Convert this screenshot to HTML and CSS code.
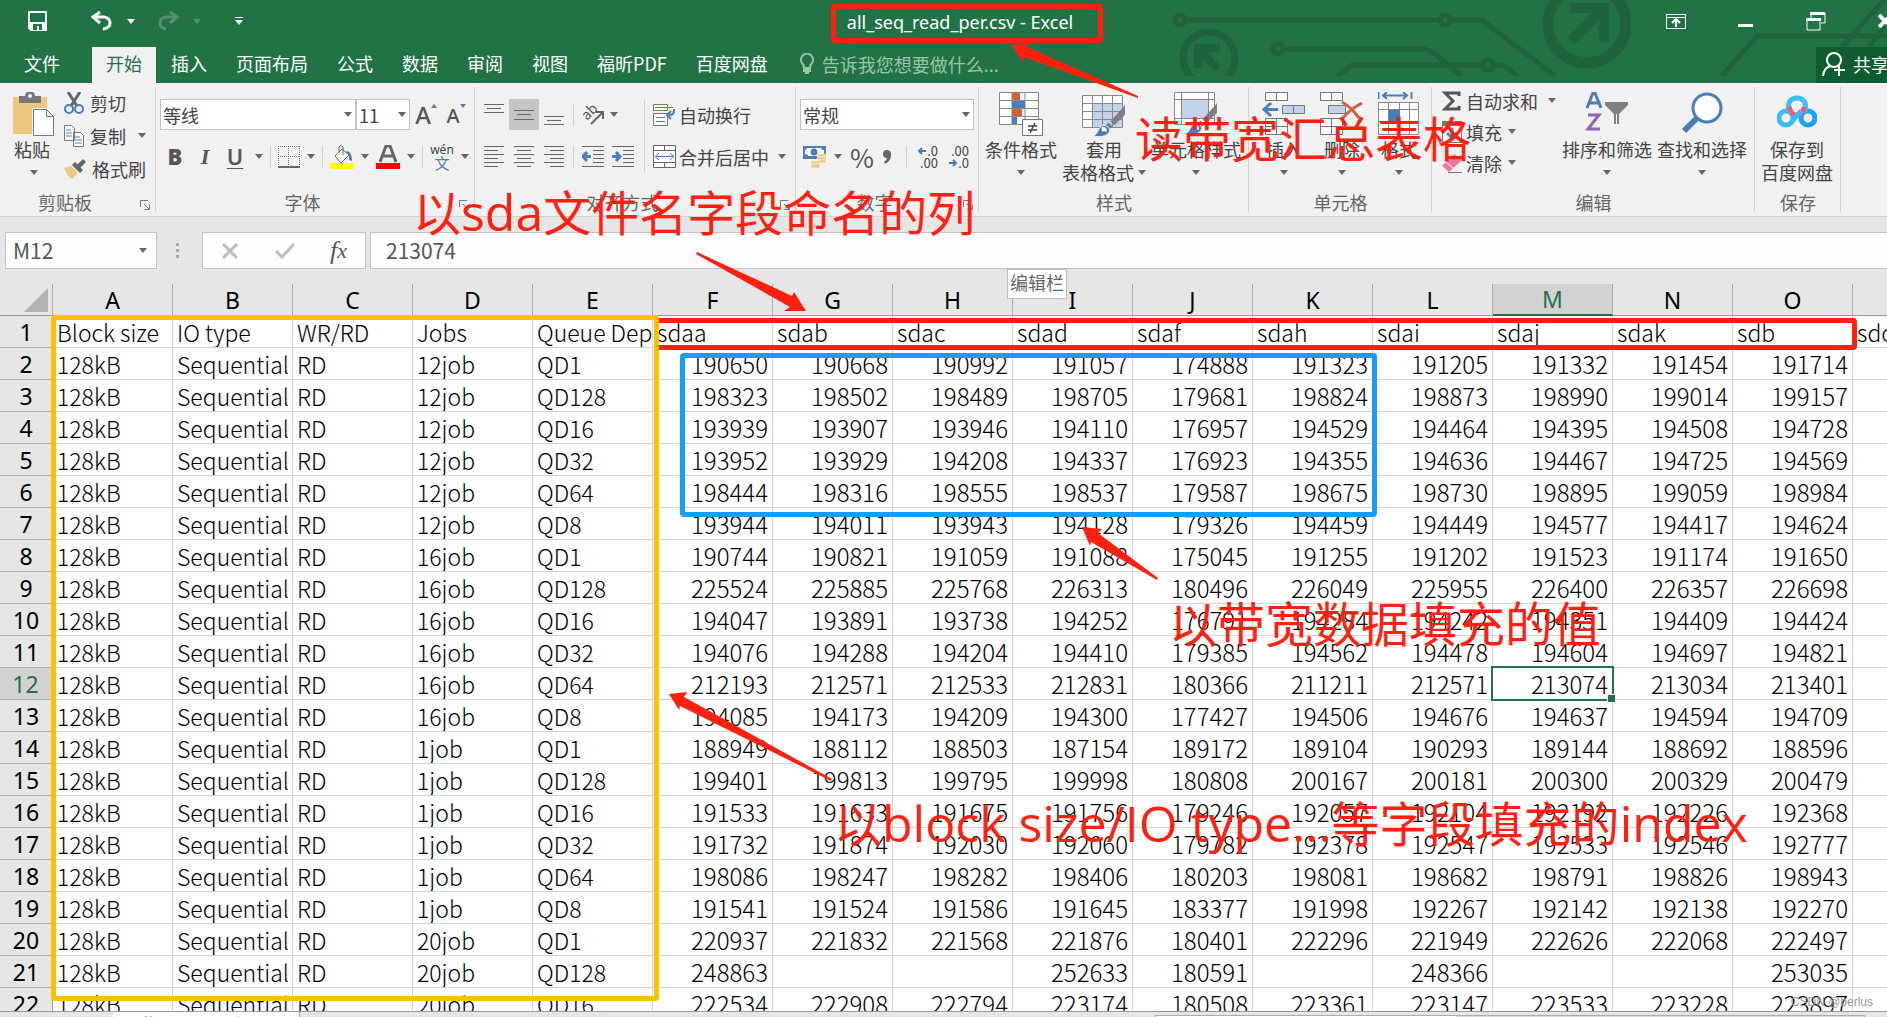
FILE: index.html
```html
<!DOCTYPE html>
<html lang="zh-CN">
<head>
<meta charset="utf-8">
<title>all_seq_read_per.csv - Excel</title>
<link rel="stylesheet" href="styles.css">
</head>
<body>
<svg class="defs" aria-hidden="true">
  <symbol id="caret" viewBox="0 0 8 5"><path d="M0 0h8L4 5z" fill="currentColor"/></symbol>
  <symbol id="launcher" viewBox="0 0 10 10"><path d="M.5 7V.5H8M4 4l5 5M9.500 4.500v5h-5" fill="none" stroke="#777"/></symbol>
  <symbol id="brush" viewBox="0 0 34 34"><path d="M33 1v10L22 22l-4-4z" fill="#7f7f7f"/><path d="M16 19l4 4-3 3-4-4z" fill="#7f7f7f"/><path d="M0 33c6-2 5-10 11-11 5 0 8 5 5 8-3 4-10 4-16 3z" fill="#4a7ebb" stroke="#f1f1f1"/><path d="M9 24c4-1 6 2 5 5-2-2-3 0-5-1z" fill="#fff"/></symbol>
</svg>

<header class="titlebar">
  <svg class="pattern" width="720" height="76" viewBox="1167 0 720 76" aria-hidden="true">
    <g fill="none" stroke="#1e633d" stroke-width="5">
      <circle cx="1180" cy="20" r="5"/><path d="M1186 20h253M1451 20h31l73 56"/><circle cx="1445" cy="20" r="5"/>
      <circle cx="1278" cy="49" r="5"/><path d="M1284 49h139q6 0 12 5l27 22"/>
      <path d="M1335 78l17-13h130M1494 65h6q6 0 18 12"/><circle cx="1488" cy="65" r="5"/>
      <path d="M1721 77l36-41h130M1842 47l42-47M1868 47l19-22"/>
      <circle cx="1209" cy="58" r="26" stroke-width="7"/>
      <circle cx="1587" cy="24" r="39" stroke-width="11"/>
      <path d="M1218 69l-18-18M1198 68V48h22" stroke-width="8"/>
      <path d="M1571 41l32-32M1570 8h34v34" stroke-width="10"/>
    </g>
  </svg>
  <div class="title-row">
    <div class="quick">
      <button class="tb" aria-label="保存"><svg width="20" height="20" viewBox="0 0 20 20"><path d="M1 1h17v18H3l-2-2z" fill="none" stroke="#fff" stroke-width="2"/><path d="M2 11h16v8H2z" fill="#fff"/><path d="M5 13h9v6h-3v-4H9v4H5z" fill="#217346"/></svg></button>
      <button class="tb undo" aria-label="撤消"><svg width="22" height="20" viewBox="0 0 22 20"><path d="M2 6h11q6 1 6 6t-7 6" fill="none" stroke="#fff" stroke-width="3"/><path d="M9 1L2 6l7 6" fill="none" stroke="#fff" stroke-width="3"/></svg></button>
      <svg class="caret" aria-hidden="true"><use href="#caret"/></svg>
      <button class="tb dim" aria-label="恢复"><svg width="22" height="20" viewBox="0 0 22 20"><path d="M20 6H9q-6 1-6 6t6 6M13 1l7 5-7 6" fill="none" stroke="#549071" stroke-width="3"/></svg></button>
      <svg class="caret dim" aria-hidden="true"><use href="#caret"/></svg>
      <button class="tb more" aria-label="自定义快速访问工具栏"><svg width="8" height="8" viewBox="0 0 8 8"><path d="M0 0h8v1H0zM0 3h8L4 8z" fill="#fff"/></svg></button>
    </div>
    <h1 class="doc-title">all_seq_read_per.csv - Excel</h1>
    <div class="window-buttons">
      <button class="tb" aria-label="功能区显示选项"><svg width="20" height="15" viewBox="0 0 20 15"><path d="M.5.5h19v14H.5zM1 3.500h18" fill="none" stroke="#fff"/><path d="M10 13V6M6 9l4-4 4 4" fill="none" stroke="#fff" stroke-width="2"/></svg></button>
      <button class="tb" aria-label="最小化"><svg width="16" height="15" viewBox="0 0 16 15"><path d="M0 10h15v3H0z" fill="#fff"/></svg></button>
      <button class="tb" aria-label="还原"><svg width="20" height="19" viewBox="0 0 20 19"><path d="M5 6V1h14v10h-4M1 7h13v11H1z" fill="none" stroke="#fff"/><path d="M4 0h15v3H4zM0 6h15v3H0z" fill="#fff"/></svg></button>
      <button class="tb" aria-label="关闭"><svg width="14" height="14" viewBox="0 0 14 14"><path d="M1 1l12 12M13 1L1 13" stroke="#fff" stroke-width="4"/></svg></button>
    </div>
  </div>
  <nav class="tabs">
    <button class="file">文件</button>
    <button class="active">开始</button>
    <button>插入</button>
    <button>页面布局</button>
    <button>公式</button>
    <button>数据</button>
    <button>审阅</button>
    <button>视图</button>
    <button>福昕PDF</button>
    <button>百度网盘</button>
    <label class="tell">
      <svg width="16" height="22" viewBox="0 0 16 22"><path d="M5 15q0-3-2-5a6 6 0 1 1 10 0q-2 2-2 5z" fill="none" stroke="#9cc4ad" stroke-width="2"/><path d="M4 16h8v3h-2v2H6v-2H4z" fill="#9cc4ad"/></svg>
      <input type="text" placeholder="告诉我您想要做什么..." aria-label="告诉我您想要做什么">
    </label>
    <button class="share"><svg width="24" height="26" viewBox="0 0 24 26"><circle cx="12" cy="9" r="7" fill="none" stroke="#fff" stroke-width="2"/><path d="M1 25q1-9 8-10M17 14v11M12 19h11" fill="none" stroke="#fff" stroke-width="2"/></svg>共享</button>
  </nav>
</header>

<section class="ribbon">
  <div class="group clipboard">
    <div class="body">
      <button class="big"><svg width="42" height="45" viewBox="0 0 42 45"><path d="M0 5h34v37H0z" fill="#eec77f" /><path d="M6 4h6a5 5 0 0 1 10 0h6v7H6z" fill="#777"/><circle cx="17" cy="4" r="2" fill="#f1f1f1"/><path d="M19 16h15l8 8v21H19z" fill="#f1f1f1"/><path d="M20.500 17.500h13l7 7v19h-20zM33.500 17.500v7h7" fill="#fff" stroke="#777"/></svg><span>粘贴</span><svg class="caret"><use href="#caret"/></svg></button>
      <div class="stack">
        <button><svg width="20" height="22" viewBox="0 0 20 22"><path d="M4 0l9 14M16 0L7 14" stroke="#666" stroke-width="3"/><circle cx="5" cy="17" r="4" fill="none" stroke="#4a7ebb" stroke-width="2"/><circle cx="15" cy="17" r="4" fill="none" stroke="#4a7ebb" stroke-width="2"/></svg>剪切</button>
        <button><svg width="20" height="22" viewBox="0 0 20 22"><path d="M.5.5h7l3 3v12H.5zM9.500 7.500h7l3 3v11h-10z" fill="#fff" stroke="#777"/><path d="M2 5h5M2 8h6M2 11h6M11 12h5M11 15h7M11 18h7" stroke="#4a7ebb"/></svg>复制<svg class="caret"><use href="#caret"/></svg></button>
        <button><svg width="22" height="20" viewBox="0 0 22 20"><path d="M0 9l7-2 7 7-6 6q-4-2-8-11z" fill="#eec77f"/><path d="M8 6l3-3 8 8-3 3z" fill="#666"/><path d="M13 6l6-6 3 3-6 6z" fill="#666"/></svg>格式刷</button>
      </div>
    </div>
    <footer>剪贴板<svg class="launch"><use href="#launcher"/></svg></footer>
  </div>

  <div class="group font">
    <div class="body rows">
      <div class="row">
        <span class="combo wide"><select aria-label="字体"><option>等线</option></select><svg class="caret"><use href="#caret"/></svg></span>
        <span class="combo size"><select aria-label="字号"><option>11</option></select><svg class="caret"><use href="#caret"/></svg></span>
        <button class="ic grow" aria-label="增大字号"><b>A</b><svg width="6" height="4" viewBox="0 0 6 4"><path d="M0 4h6L3 0z" fill="#4a7ebb"/></svg></button>
        <button class="ic shrink" aria-label="减小字号"><b>A</b><svg width="6" height="4" viewBox="0 0 6 4"><path d="M0 0h6L3 4z" fill="#4a7ebb"/></svg></button>
      </div>
      <div class="row second">
        <button class="ic biu" aria-label="加粗"><b>B</b></button>
        <button class="ic biu serif" aria-label="倾斜"><i>I</i></button>
        <button class="ic biu" aria-label="下划线"><u>U</u></button>
        <svg class="caret"><use href="#caret"/></svg>
        <i class="sep"></i>
        <button class="ic" aria-label="边框"><svg width="22" height="22" viewBox="0 0 22 22"><path d="M.5 0v20M21.500 0v20M10.500 0v20M0 .5h22M0 10.500h22" stroke="#777" stroke-dasharray="1 1" fill="none"/><path d="M0 21h22" stroke="#666" stroke-width="2"/></svg></button>
        <svg class="caret"><use href="#caret"/></svg>
        <i class="sep"></i>
        <button class="ic" aria-label="填充颜色"><svg width="24" height="24" viewBox="0 0 24 24"><path d="M5 11l7-7 7 6-8 8z" fill="#fff" stroke="#666"/><path d="M9 8V2q2-3 4 0v8" fill="none" stroke="#666"/><path d="M17 6q5 1 5 10l-3-1q1-4-3-8z" fill="#4a7ebb"/><path d="M0 18h24v6H0z" fill="#ff0"/></svg></button>
        <svg class="caret"><use href="#caret"/></svg>
        <button class="ic" aria-label="字体颜色"><svg width="24" height="24" viewBox="0 0 24 24"><path d="M4 17l6-16h4l6 16M7 11h10" fill="none" stroke="#666" stroke-width="3"/><path d="M0 18h24v6H0z" fill="red"/></svg></button>
        <svg class="caret"><use href="#caret"/></svg>
        <i class="sep"></i>
        <button class="ic wen"><span>wén</span><span class="han">文</span></button>
        <svg class="caret"><use href="#caret"/></svg>
      </div>
    </div>
    <footer>字体<svg class="launch"><use href="#launcher"/></svg></footer>
  </div>

  <div class="group align">
    <div class="body">
      <div class="rows">
        <div class="row">
          <button class="ic al" aria-label="顶端对齐"><svg width="20" height="22" viewBox="0 0 20 22"><path d="M0 .5h20M3 4.500h14M0 8.500h20" stroke="#666"/></svg></button>
          <button class="ic al on" aria-label="垂直居中"><svg width="20" height="22" viewBox="0 0 20 22"><path d="M0 6.500h20M3 10.500h14M0 15.500h20" stroke="#666"/></svg></button>
          <button class="ic al" aria-label="底端对齐"><svg width="20" height="22" viewBox="0 0 20 22"><path d="M0 12.500h20M3 16.500h14M0 20.500h20" stroke="#666"/></svg></button>
          <i class="sep"></i>
          <button class="ic orient" aria-label="方向"><svg width="22" height="20" viewBox="0 0 22 20"><text x="4" y="16" font-size="14" fill="#555" transform="rotate(-45 4 16)">ab</text><path d="M8 19L19 8M13 7h7v7" fill="none" stroke="#666" stroke-width="2"/></svg></button>
          <svg class="caret"><use href="#caret"/></svg>
        </div>
        <div class="row second">
          <button class="ic al" aria-label="左对齐"><svg width="20" height="22" viewBox="0 0 20 22"><path d="M0 .5h20M0 4.500h14M0 8.500h20M0 12.500h14M0 16.500h20M0 20.500h14" stroke="#666"/></svg></button>
          <button class="ic al" aria-label="居中"><svg width="20" height="22" viewBox="0 0 20 22"><path d="M0 .5h20M3 4.500h14M0 8.500h20M3 12.500h14M0 16.500h20M3 20.500h14" stroke="#666"/></svg></button>
          <button class="ic al" aria-label="右对齐"><svg width="20" height="22" viewBox="0 0 20 22"><path d="M0 .5h20M6 4.500h14M0 8.500h20M6 12.500h14M0 16.500h20M6 20.500h14" stroke="#666"/></svg></button>
          <i class="sep"></i>
          <button class="ic al" aria-label="减少缩进"><svg width="22" height="22" viewBox="0 0 22 22"><path d="M0 .5h22M11 4.500h11M11 8.500h11M11 12.500h11M11 16.500h11M0 20.500h22" stroke="#666"/><path d="M9 10.500H3M5 6l-4 4.500L5 15" stroke="#4a7ebb" stroke-width="3" fill="none"/></svg></button>
          <button class="ic al" aria-label="增加缩进"><svg width="22" height="22" viewBox="0 0 22 22"><path d="M0 .5h22M11 4.500h11M11 8.500h11M11 12.500h11M11 16.500h11M0 20.500h22" stroke="#666"/><path d="M0 10.500h6M4 6l4 4.500L4 15" stroke="#4a7ebb" stroke-width="3" fill="none"/></svg></button>
        </div>
      </div>
      <i class="sep tall"></i>
      <div class="rows wrap">
        <button class="row"><svg width="23" height="22" viewBox="0 0 23 22"><path d="M.5.5h14v6H.5zM.5 9.500h14v12H.5z" fill="#fff" stroke="#777"/><path d="M2 3.500h18M3 13.500h9M3 17.500h9" stroke="#4a7ebb"/><path d="M21 5q1 6-5 6M18 7l-4 4 4 4" fill="none" stroke="#4a7ebb" stroke-width="2"/></svg>自动换行</button>
        <button class="row second"><svg width="23" height="23" viewBox="0 0 23 23"><path d="M.5.5h22v22H.5zM.5 5.500h22M.5 17.500h22M11.500 1v4M11.500 18v4" fill="#fff" stroke="#666"/><path d="M3 11.500h17M6 8l-4 3.500L6 15M17 8l4 3.500-4 3.500" fill="none" stroke="#4a7ebb"/></svg>合并后居中<svg class="caret"><use href="#caret"/></svg></button>
      </div>
    </div>
    <footer>对齐方式<svg class="launch"><use href="#launcher"/></svg></footer>
  </div>

  <div class="group number">
    <div class="body rows">
      <div class="row"><span class="combo format"><select aria-label="数字格式"><option>常规</option></select><svg class="caret"><use href="#caret"/></svg></span></div>
      <div class="row second">
        <button class="ic" aria-label="会计数字格式"><svg width="24" height="24" viewBox="0 0 24 24"><path d="M0 1h23v13H0z" fill="#4a7ebb"/><path d="M2 5q2 0 2-2h14q0 2 3 2v4q-3 0-3 2H5q0-2-3-2z" fill="#fff"/><circle cx="11" cy="7" r="3.500" fill="#4a7ebb"/><g fill="#eec77f" stroke="#fff" stroke-width=".5"><rect x="14" y="9" width="9" height="3" rx="1"/><rect x="14" y="12" width="9" height="3" rx="1"/><rect x="14" y="15" width="9" height="3" rx="1"/><rect x="8" y="16" width="9" height="3" rx="1"/><rect x="8" y="19" width="9" height="4" rx="1"/></g></svg></button>
        <svg class="caret"><use href="#caret"/></svg>
        <button class="ic pct" aria-label="百分比样式">%</button>
        <button class="ic" aria-label="千位分隔样式"><svg width="10" height="16" viewBox="0 0 10 16"><path d="M5 1a4 4 0 0 1 4 5q0 6-6 9l-1-2q3-2 3-4a4 4 0 0 1 0-8z" fill="#666"/></svg></button>
        <i class="sep"></i>
        <button class="ic dec" aria-label="增加小数位数"><span><svg width="10" height="8" viewBox="0 0 10 8"><path d="M9 4H2M5 1L2 4l3 3" fill="none" stroke="#4a7ebb" stroke-width="2"/></svg>.0</span><span>.00</span></button>
        <button class="ic dec" aria-label="减少小数位数"><span>.00</span><span><svg width="10" height="8" viewBox="0 0 10 8"><path d="M1 4h7M5 1l3 3-3 3" fill="none" stroke="#4a7ebb" stroke-width="2"/></svg>.0</span></button>
      </div>
    </div>
    <footer>数字<svg class="launch"><use href="#launcher"/></svg></footer>
  </div>

  <div class="group styles">
    <div class="body">
      <button class="big"><svg width="44" height="45" viewBox="0 0 44 45"><path d="M.5.5h39v32H.5zM.5 8.500h39M.5 16.500h39M.5 24.500h39M13 1v31M26 1v31" fill="#fff" stroke="#888"/><path d="M13 1h8v7h-8zM13 17h10v7H13z" fill="#d65f3d"/><path d="M13 9h13v7H13zM13 25h5v7h-5z" fill="#4a7ebb"/><path d="M23.500 27.500h20v16h-20z" fill="#fff" stroke="#777"/><path d="M29 34h9M29 38h9M36 31l-5 10" stroke="#444" stroke-width="1.500"/></svg><span>条件格式</span><svg class="caret"><use href="#caret"/></svg></button>
      <button class="big"><svg width="44" height="45" viewBox="0 0 44 45"><path d="M.5 3.500h40v32H.5z" fill="#fff"/><path d="M10 12h30v23H10z" fill="#c0d3ea"/><path d="M.5 3.500h40v32H.5zM.5 11.500h40M.5 19.500h40M.5 27.500h40M10.500 4v31M20.500 4v31M30.500 4v31" fill="none" stroke="#888"/><use href="#brush" x="11" y="12" width="33" height="33"/></svg><span>套用</span><span class="inline">表格格式<svg class="caret"><use href="#caret"/></svg></span></button>
      <button class="big"><svg width="44" height="45" viewBox="0 0 44 45"><path d="M.5.5h40v32H.5zM.5 7.500h40M.5 26.500h40M7.500 1v31M34.500 1v31" fill="#fff" stroke="#888"/><path d="M8 8h26v18H8z" fill="#c0d3ea"/><use href="#brush" x="11" y="10" width="33" height="33"/></svg><span>单元格样式</span><svg class="caret"><use href="#caret"/></svg></button>
    </div>
    <footer>样式</footer>
  </div>

  <div class="group cells">
    <div class="body">
      <button class="big"><svg width="44" height="45" viewBox="0 0 44 45"><path d="M3.500.5h22v8h-22zM14.500 1v8M3.500 26.500h22v16h-22zM14.500 27v15M4 34.500h21" fill="#fff" stroke="#777"/><path d="M20.500 13.500h22v8h-22zM31.500 14v8" fill="#c0d3ea" stroke="#777"/><path d="M16 17.500H4M9 11l-7 6.500L9 24" fill="none" stroke="#4a7ebb" stroke-width="3"/></svg><span>插入</span><svg class="caret"><use href="#caret"/></svg></button>
      <button class="big"><svg width="44" height="45" viewBox="0 0 44 45"><path d="M.5.5h22v8H.5zM11.500 1v8M.5 26.500h22v16H.5zM11.500 27v15M1 34.500h21" fill="#fff" stroke="#777"/><path d="M8.500 13.500h17v8h-17z" fill="#c0d3ea" stroke="#777"/><path d="M22 10q8 4 17 16M42 11q-12 6-20 16" fill="none" stroke="#d65f3d" stroke-width="3"/></svg><span>删除</span><svg class="caret"><use href="#caret"/></svg></button>
      <button class="big"><svg width="42" height="45" viewBox="0 0 42 45"><path d="M.5 0v7M33.500 0v7M6 3.500h22M9 0L5 3.500 9 7M25 0l4 3.500L25 7" fill="none" stroke="#4a7ebb" stroke-width="2"/><path d="M.5 10.500h40v32H.5zM.5 17.500h40M.5 29.500h40M10.500 11v31M21.500 11v31M31.500 11v31" fill="#fff" stroke="#888"/><path d="M11 18h11v12H11z" fill="#4a7ebb"/></svg><span>格式</span><svg class="caret"><use href="#caret"/></svg></button>
    </div>
    <footer>单元格</footer>
  </div>

  <div class="group editing">
    <div class="body">
      <div class="stack">
        <button><svg width="20" height="20" viewBox="0 0 20 20"><path d="M17 5V2H3l8 8-8 8h14v-3" fill="none" stroke="#555" stroke-width="3"/></svg>自动求和<svg class="caret"><use href="#caret"/></svg></button>
        <button><svg width="20" height="22" viewBox="0 0 20 22"><path d="M.5.5h19v21H.5z" fill="#fff" stroke="#777"/><path d="M0 0h20v5H0z" fill="#777"/><path d="M10 7v9M5 12l5 5 5-5" fill="none" stroke="#4a7ebb" stroke-width="3"/></svg>填充<svg class="caret"><use href="#caret"/></svg></button>
        <button><svg width="20" height="20" viewBox="0 0 20 20"><path d="M0 13L12 1l8 6L7 19z" fill="#e8799a"/><path d="M4 9l7 6" stroke="#fff"/><path d="M6 19.500h14" stroke="#777"/></svg>清除<svg class="caret"><use href="#caret"/></svg></button>
      </div>
      <button class="big"><svg width="44" height="45" viewBox="0 0 44 45"><path d="M2 16L8 1h2l6 15M5 11h8" fill="none" stroke="#4a7ebb" stroke-width="3"/><path d="M3 23h11L3 37h12" fill="none" stroke="#9460b4" stroke-width="3"/><path d="M20 10h23v3l-9 9v10h-5V22l-9-9z" fill="#7f7f7f"/><path d="M31.500 22v10" stroke="#fff"/></svg><span>排序和筛选</span><svg class="caret"><use href="#caret"/></svg></button>
      <button class="big"><svg width="42" height="45" viewBox="0 0 42 45"><circle cx="26" cy="16" r="14" fill="#fff" stroke="#4a7ebb" stroke-width="3"/><path d="M16 26L3 39" stroke="#4a7ebb" stroke-width="6"/></svg><span>查找和选择</span><svg class="caret"><use href="#caret"/></svg></button>
    </div>
    <footer>编辑</footer>
  </div>

  <div class="group baidu">
    <div class="body">
      <button class="big"><svg width="40" height="45" viewBox="0 0 40 45"><g fill="none" stroke-width="5"><circle cx="9" cy="26" r="7" stroke="#36bdf2"/><circle cx="31" cy="26" r="7" stroke="#1aa3f5"/><path d="M13 21q-5-14 7-15 12 1 7 15" stroke="#36c2f2"/><path d="M12 15q3 9 8 8 6-1 7-8" stroke="#f2567b"/><path d="M15 29l9-10" stroke="#36bdf2"/></g></svg><span>保存到</span><span>百度网盘</span></button>
    </div>
    <footer>保存</footer>
  </div>
</section>

<section class="formula-bar">
  <span class="name-box"><input type="text" value="M12" aria-label="名称框"><svg class="caret"><use href="#caret"/></svg></span>
  <svg class="grip" width="4" height="16" viewBox="0 0 4 16"><path d="M0 0h3v3H0zM0 6h3v3H0zM0 12h3v3H0z" fill="#aaa"/></svg>
  <div class="fx">
    <button aria-label="取消"><svg width="18" height="16" viewBox="0 0 18 16"><path d="M2 1l14 14M16 1L2 15" stroke="#bdbdbd" stroke-width="3"/></svg></button>
    <button aria-label="输入"><svg width="20" height="16" viewBox="0 0 20 16"><path d="M1 8l6 6L19 1" fill="none" stroke="#bdbdbd" stroke-width="3"/></svg></button>
    <button class="fn" aria-label="插入函数">f<small>x</small></button>
  </div>
  <div class="formula"><input type="text" value="213074" aria-label="编辑栏"><span class="tip">编辑栏</span></div>
</section>

<main class="sheet">
  <table id="grid"></table>
</main>

<footer class="sheet-tabs">
  <button class="sheet-tab">all_seq_read_per</button>
  <div class="hscroll"></div>
</footer>

<div class="notes">
  <div class="box b-header"></div>
  <div class="box b-index"></div>
  <div class="box b-values"></div>
  <div class="box b-title"></div>
  <svg class="arrows" width="1887" height="1017" viewBox="0 0 1887 1017" fill="#ff2010">
    <path d="M1011 45l18-2-2 4 111 49v2l-114-41-1 5z"/>
    <path d="M697 252l95 44 2-4 12 19h-22l6-4-94-53z"/>
    <path d="M1082 527l20 2-4 4 60 45-1 2-66-38-1 4z"/>
    <path d="M669 694l18-2-3 5 148 82-1 2-151-75-1 4z"/>
  </svg>
  <p class="note n-table">读带宽汇总表格</p>
  <p class="note n-columns">以<span>sda</span>文件名字段命名的列</p>
  <p class="note n-values">以带宽数据填充的值</p>
  <p class="note n-index">以<span>block size/IO type...</span>等字段填充的<span>index</span></p>
  <p class="watermark">CSDN @berlus</p>
</div>
<script src="grid.js"></script>
</body>
</html>
```
FILE: styles.css
```css
* { box-sizing: border-box; }
body {
  margin: 0;
  height: 100vh;
  display: flex;
  flex-direction: column;
  position: relative;
  overflow: hidden;
  background: #e6e6e6;
  color: #444;
  font: 18px/24px "Noto Sans CJK SC", sans-serif;
}
button, input, select { font: inherit; color: inherit; border: 0; padding: 0; margin: 0; background: none; }
button { display: flex; align-items: center; white-space: nowrap; }
svg { flex: none; display: block; }
.defs { position: absolute; width: 0; height: 0; }
.caret { width: 8px; height: 5px; color: #666; }

/* title bar and tabs */
.titlebar { position: relative; background: #217346; color: #fff; flex: none; }
.pattern { position: absolute; right: 0; top: 0; }
.title-row { position: relative; height: 47px; display: flex; align-items: flex-start; justify-content: space-between; padding: 11px 0 0 28px; }
.quick, .window-buttons { display: flex; align-items: center; height: 20px; flex: 1; }
.undo { margin-left: 43px; }
.quick .caret { color: #fff; margin: 0 22px 0 14px; }
.quick .caret.dim { color: #549071; margin-right: 34px; }
.doc-title { margin: 0; font: 400 18px/22px "Noto Sans", sans-serif; }
.window-buttons { justify-content: flex-end; gap: 52px; margin-right: -5px; }
.tabs { position: relative; display: flex; gap: 1px; height: 36px; }
.tabs button { padding: 0 14px 4px; }
.tabs .file { padding: 0 31px 4px 24px; }
.tabs .active { background: #f1f1f1; color: #217346; }
.tell { display: flex; align-items: center; gap: 7px; margin-left: 16px; padding-bottom: 3px; color: #9cc4ad; }
.tell input { width: 190px; }
.tell input::placeholder { color: #9cc4ad; opacity: 1; }
.tabs .share { margin: 0 -16px 0 auto; padding: 0 14px 2px 6px; gap: 7px; background: #0e5c2f; }

/* ribbon */
.ribbon { display: flex; flex: none; height: 134px; background: #f1f1f1; border-bottom: 1px solid #d2d2d2; overflow: hidden; }
.group { flex: none; display: flex; flex-direction: column; position: relative; background: linear-gradient(#d2d2d2, #d2d2d2) right 4px / 1px 125px no-repeat; }
.group .body { height: 105px; display: flex; padding-top: 9px; }
.group footer { position: relative; display: flex; justify-content: center; height: 28px; line-height: 28px; color: #666; }
.launch { position: absolute; right: 6px; top: 12px; width: 10px; height: 10px; }
.big { flex-direction: column; height: 96px; justify-content: flex-start; line-height: 23px; }
.big > svg:first-child { margin-bottom: 1px; }
.big > .caret { margin-top: 9px; }
.inline { display: flex; align-items: center; gap: 4px; }
.stack { display: flex; flex-direction: column; }
.stack button { height: 33px; gap: 6px; }
.clipboard { width: 156px; }
.clipboard .body { padding: 3px 0 0 13px; gap: 9px; }
.clipboard .big { padding-top: 6px; }
.clipboard .caret { margin-left: 6px; }
.clipboard .big .caret { margin-left: 0; }
.clipboard .big span { margin-right: 4px; }
.row { display: flex; align-items: center; height: 31px; }
.row.second { margin-top: 11px; }
.group .rows { flex-direction: column; padding-top: 0; }
.group .body.rows, .align .body { padding-top: 16px; }
.sep { width: 1px; height: 22px; background: #d2d2d2; }
.combo { position: relative; height: 31px; }
.combo select { appearance: none; width: 100%; height: 31px; background: #fff; border: 1px solid #c3c3c3; border-radius: 0; padding-left: 2px; }
.combo .caret { position: absolute; right: 4px; top: 13px; }
.font { width: 319px; }
.font .body { padding-left: 4px; }
.wide { width: 196px; }
.size { width: 54px; }
.ic { height: 31px; justify-content: center; }
.grow, .shrink { align-items: flex-start; width: 22px; margin-left: 5px; line-height: 31px; font-family: "Noto Sans", sans-serif; font-size: 24px; }
.grow svg, .shrink svg { margin-top: 5px; }
.shrink { font-size: 20px; margin-left: 8px; line-height: 34px; }
.grow b, .shrink b { font-weight: 500; color: #555; }
.biu { width: 30px; font: 700 22px/31px "Noto Sans", sans-serif; color: #555; }
.biu u { font-weight: 600; text-underline-offset: 3px; text-decoration-thickness: 1px; }
.biu.serif { font-family: "Liberation Serif", serif; }
.font .second { gap: 7px; }
.font .second .biu { margin-right: -7px; }
.font .second .biu + .caret { margin-left: 5px; }
.wen { flex-direction: column; width: 24px; font-size: 12px; line-height: 12px; font-family: "Noto Sans", sans-serif; }
.wen .han { font: 15px/14px "Noto Sans CJK SC", sans-serif; color: #4a7ebb; }
.align { width: 321px; }
.align .body { padding-left: 4px; }
.al { width: 30px; }
.on { background: #c5c5c5; }
.align .row .sep { margin: 0 4px; }
.orient { width: 32px; }
.align .body .tall { height: 74px; margin-left: 1px; }
.align .rows:first-child { width: 164px; }
.wrap { padding-left: 8px; }
.wrap .row { gap: 3px; }
.wrap .row .caret { margin-left: 6px; }
.number { width: 183px; }
.number .body { padding-left: 4px; }
.format { width: 174px; }
.number .second { gap: 7px; padding-left: 3px; }
.pct { font-size: 26px; color: #555; width: 26px; }
.number .sep { margin: 0 0 0 7px; }
.dec { flex-direction: column; width: 24px; font-size: 13px; line-height: 12px; align-items: flex-end; }
.dec span { display: flex; align-items: center; }
.clipboard footer, .font footer, .align footer, .number footer { padding-right: 26px; }
.styles { width: 270px; }
.styles .body { padding-left: 6px; gap: 5px; }
.cells { width: 183px; }
.cells .body { padding-left: 13px; gap: 14px; }
.editing { width: 323px; }
.editing .stack { width: 115px; }
.editing .stack button { height: 31px; gap: 4px; }
.editing .body { padding-left: 10px; gap: 5px; }
.editing .body .stack { margin-top: -7px; }
.editing .stack .caret { margin-left: 2px; }
.editing .stack button:first-child .caret { margin-left: 6px; }
.baidu { width: 86px; }
.baidu .body { padding-left: 6px; }

/* formula bar */
.formula-bar { flex: none; display: flex; align-items: center; height: 67px; padding: 15px 0 15px 5px; }
.name-box, .fx, .formula { height: 37px; background: #fdfdfd; border: 1px solid #c3c3c3; display: flex; align-items: center; }
.name-box { width: 152px; padding: 0 9px 0 7px; }
.name-box input { flex: 1; min-width: 0; }
.name-box input, .formula input { font-size: 21px; line-height: 30px; padding-bottom: 2px; color: #555; }
.grip { margin: 0 22px 0 19px; }
.fx { width: 164px; justify-content: space-between; padding: 0 18px; }
.fn { font: italic 26px/30px "Liberation Serif", serif; color: #555; }
.fn small { font-size: 22px; }
.formula { position: relative; flex: 1; margin-left: 4px; border-right: 0; padding-left: 15px; }
.formula input { flex: 1; }
.tip { position: absolute; left: 636px; top: 36px; padding: 0 2px; height: 30px; line-height: 24px; color: #666; background: #fff; border: 1px solid #bdbdbd; z-index: 1; }

/* grid */
.sheet { flex: 1; min-height: 0; overflow: hidden; background: #fff; }
#grid { border-collapse: separate; border-spacing: 0; table-layout: fixed; width: 1973px; color: #000; }
#grid th, #grid td { height: 32px; padding: 0 4px; overflow: hidden; white-space: nowrap; font-weight: 400; line-height: 30px; }
#grid th { background: #e6e6e6; font-size: 23px; font-family: "Noto Sans", sans-serif; }
#grid thead th { border-right: 1px solid #ababab; border-bottom: 1px solid #9b9b9b; }
#grid tbody th { border-right: 1px solid #9b9b9b; border-bottom: 1px solid #ababab; padding: 0; }
#grid td { border-right: 1px solid #d4d4d4; border-bottom: 1px solid #d4d4d4; font-size: 23px; font-weight: 300; }
#grid td.num { text-align: right; font-size: 24px; }
#grid th.sel { background: #d2d2d2; color: #217346; }
#grid thead th.sel { border-bottom: 2px solid #217346; }
#grid tbody th.sel { border-right: 2px solid #217346; }
#grid td.cur { position: relative; overflow: visible; }
.cur::before { content: ""; position: absolute; inset: -2px; border: 2px solid #217346; }
.cur::after { content: ""; position: absolute; right: -3px; bottom: -3px; width: 7px; height: 7px; background: #217346; border: 1px solid #fff; border-width: 1px 0 0 1px; }
.corner svg { margin-left: auto; }
.first { width: 53px; }
.data { width: 120px; }

.sheet-tabs { flex: none; height: 6px; border-top: 1px solid #9b9b9b; display: flex; justify-content: space-between; overflow: hidden; padding: 0 22px 0 113px; }
.sheet-tab { width: 187px; height: 32px; justify-content: center; background: #fff; border-right: 1px solid #9b9b9b; color: #217346; line-height: 22px; align-items: flex-start; }
.hscroll { width: 710px; height: 20px; margin-top: 3px; background: linear-gradient(90deg, #fff 300px, #dadada 300px); border: 1px solid #ababab; }

/* markup drawn over the window */
.notes { position: absolute; inset: 0; pointer-events: none; color: #ff2010; z-index: 2; overflow: hidden; }
.arrows { position: absolute; left: 0; top: 0; }
.box { position: absolute; border: 5px solid #ff2010; border-radius: 4px; }
.b-title { left: 831px; top: 4px; width: 272px; height: 39px; }
.b-header { left: 654px; top: 318px; width: 1203px; height: 32px; }
.b-index { left: 51px; top: 315px; width: 608px; height: 686px; border-color: #ffc000; }
.b-values { left: 680px; top: 353px; width: 697px; height: 164px; border-color: #1a9bff; }
.note { position: absolute; margin: 0; font-size: 48px; line-height: 48px; white-space: nowrap; }
.note span { font-family: "Open Sans", sans-serif; font-size: 50px; }
.n-table { left: 1135px; top: 112px; }
.n-columns { left: 413px; top: 186px; }
.n-values { left: 1169px; top: 597px; }
.n-index { left: 834px; top: 797px; }
.watermark { position: absolute; right: 14px; bottom: 7px; margin: 0; font: 12px/16px "Liberation Sans", sans-serif; color: #999; }
```
FILE: grid.js
```js
// Sheet contents: index fields first, then one bandwidth value per disk (F to O).
const header = ["Block size", "IO type", "WR/RD", "Jobs", "Queue Depth", "sdaa", "sdab", "sdac", "sdad", "sdaf", "sdah", "sdai", "sdaj", "sdak", "sdb", "sdc"];
const rows = `
12job QD1 190650 190668 190992 191057 174888 191323 191205 191332 191454 191714
12job QD128 198323 198502 198489 198705 179681 198824 198873 198990 199014 199157
12job QD16 193939 193907 193946 194110 176957 194529 194464 194395 194508 194728
12job QD32 193952 193929 194208 194337 176923 194355 194636 194467 194725 194569
12job QD64 198444 198316 198555 198537 179587 198675 198730 198895 199059 198984
12job QD8 193944 194011 193943 194128 179326 194459 194449 194577 194417 194624
16job QD1 190744 190821 191059 191088 175045 191255 191202 191523 191174 191650
16job QD128 225524 225885 225768 226313 180496 226049 225955 226400 226357 226698
16job QD16 194047 193891 193738 194252 176791 194284 194242 194351 194409 194424
16job QD32 194076 194288 194204 194410 179385 194562 194478 194604 194697 194821
16job QD64 212193 212571 212533 212831 180366 211211 212571 213074 213034 213401
16job QD8 194085 194173 194209 194300 177427 194506 194676 194637 194594 194709
1job QD1 188949 188112 188503 187154 189172 189104 190293 189144 188692 188596
1job QD128 199401 199813 199795 199998 180808 200167 200181 200300 200329 200479
1job QD16 191533 191633 191675 191756 179246 192057 192104 192192 192226 192368
1job QD32 191732 191874 192030 192060 179782 192378 192547 192533 192546 192777
1job QD64 198086 198247 198282 198406 180203 198081 198682 198791 198826 198943
1job QD8 191541 191524 191586 191645 183377 191998 192267 192142 192138 192270
20job QD1 220937 221832 221568 221876 180401 222296 221949 222626 222068 222497
20job QD128 248863 - - 252633 180591 - 248366 - - 253035
20job QD16 222534 222908 222794 223174 180508 223361 223147 223533 223228 223897
`.trim().split("\n").map(line => ["128kB", "Sequential", "RD", ...line.split(" ").map(v => v === "-" ? "" : v), ""]);

const current = { col: 12, row: 12 };
const letters = "ABCDEFGHIJKLMNOP".split("");
const head = letters.map((l, i) => `<th scope="col" class="data${i === current.col ? " sel" : ""}">${l}</th>`).join("");
const body = [header, ...rows].map((cells, r) => {
  const n = r + 1;
  const tds = cells.map((v, c) => {
    const cls = [r > 0 && c > 4 ? "num" : "", n === current.row && c === current.col ? "cur" : ""].join(" ").trim();
    return `<td${cls ? ` class="${cls}"` : ""}>${v}</td>`;
  }).join("");
  return `<tr><th scope="row"${n === current.row ? ' class="sel"' : ""}>${n}</th>${tds}</tr>`;
}).join("");
document.getElementById("grid").innerHTML =
  `<thead><tr><th class="first corner"><svg width="24" height="24" viewBox="0 0 24 24"><path d="M24 0v24H0z" fill="#b1b1b1"/></svg></th>${head}</tr></thead><tbody>${body}</tbody>`;
```
